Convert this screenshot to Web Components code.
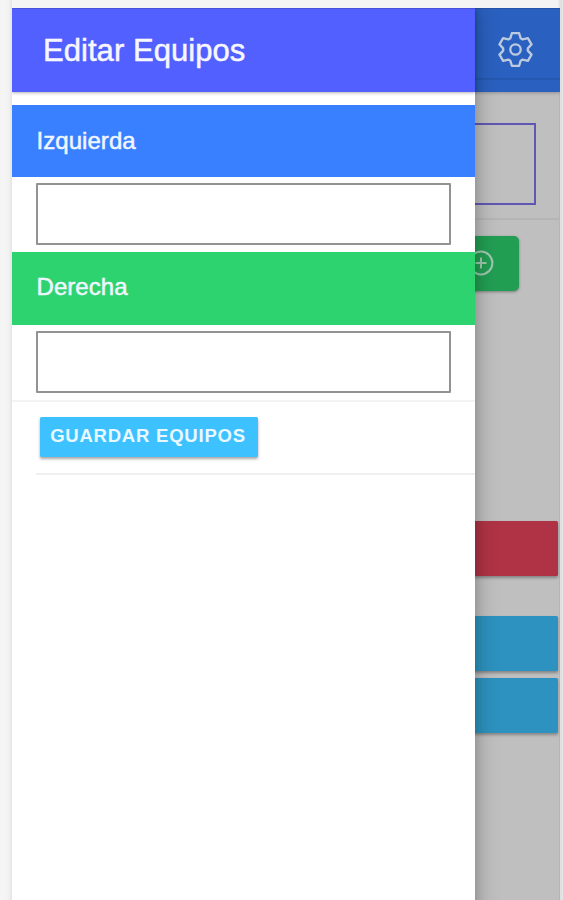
<!DOCTYPE html>
<html lang="es">
<head>
<meta charset="utf-8">
<title>Editar Equipos</title>
<style>
html,body{margin:0;height:100%;overflow:hidden;background:#f4f4f4;font-family:"Liberation Sans",Arial,sans-serif}
</style>
</head>
<body>
<device-frame>
  <match-page></match-page>
  <side-menu heading="Editar Equipos">
    <team-field label="Izquierda" style="--bar:#3880ff"></team-field>
    <team-field label="Derecha" style="--bar:#2dd36f;--lift:2px"></team-field>
    <menu-action><save-button>GUARDAR EQUIPOS</save-button></menu-action>
  </side-menu>
</device-frame>
<script>
function define(name, render) {
  customElements.define(name, class extends HTMLElement {
    constructor() {
      super();
      this.attachShadow({ mode: 'open' });
    }
    connectedCallback() {
      this.shadowRoot.innerHTML = '<style>*{box-sizing:border-box}</style>' + render(this);
    }
  });
}

define('device-frame', () => `
<style>
:host{display:block;box-sizing:border-box;height:100vh;padding:8px 3px 0 12px;background:linear-gradient(90deg,#f5f5f5 0 5px,#f1f1f1 9px,#e6e6e6 11.5px,#f4f4f4 12px,#f4f4f4 558px,#dedede 560px,#e6e6e6)}
.stack{display:grid;height:100%;overflow:hidden}
::slotted(*){grid-area:1/1;min-width:0}
</style>
<div class="stack"><slot></slot></div>`);

define('side-menu', el => `
<style>
:host{display:block;width:463.4px;height:calc(100% + 40px);background:#fff;box-shadow:3px 0 20px rgba(0,0,0,.22),1px 0 8px rgba(0,0,0,.1);z-index:1}
header{height:84px;padding:0 31px;display:flex;align-items:center;background:#5260ff;color:#f6f7ff;font-size:31px;letter-spacing:.05px;box-shadow:0 1px 3px rgba(0,0,0,.3);border-top:1px solid #4651d8}
h1{font:inherit;margin:0;-webkit-text-stroke:.5px currentColor}
main{padding-top:12.6px}
</style>
<header><h1>${el.getAttribute('heading')}</h1></header>
<main><slot></slot></main>`);

define('team-field', el => `
<style>
:host{display:block;height:147.6px}
.bar{height:72.5px;padding:0 24.5px var(--lift,0px);display:flex;align-items:center;background:var(--bar);color:#f0f6ff;font-size:24px;letter-spacing:.05px;-webkit-text-stroke:.5px currentColor}
input{display:block;width:415px;height:62px;margin:6px 0 0 24px;border:2px solid #929292;border-radius:1px;background:#fff}
</style>
<div class="bar">${el.getAttribute('label')}</div><input aria-label="${el.getAttribute('label')}">`);

define('menu-action', () => `
<style>
:host{display:block;border-top:2px solid #f3f3f3}
div{height:73.5px;margin-left:24px;padding:15px 4px;border-bottom:2px solid #f0f0f0}
</style>
<div><slot></slot></div>`);

define('save-button', () => `
<style>
:host{display:block;width:218px;height:40px}
button{width:100%;height:100%;padding:0 2px 2px 0;border:0;border-radius:1.5px;background:#3dc2ff;color:#e9f8ff;font:bold 18.5px "Liberation Sans",Arial,sans-serif;letter-spacing:.78px;white-space:nowrap;box-shadow:0 2px 3px rgba(0,0,0,.35)}
</style>
<button><slot></slot></button>`);

define('settings-icon', () => `
<style>:host{display:block;width:39px;height:39px}svg{display:block}</style>
<svg width="39" height="39" viewBox="-19.5 -19.5 39 39" fill="none" stroke="#bccae0" stroke-width="2.3" stroke-linejoin="round"><circle r="5.2"/><path d="M-5.2-11.2L-3.6-16.4H3.6L5.2-11.2 7.1-10.1 12.4-11.3 16-5.1 12.3-1.1V1.1L16 5.1 12.4 11.3 7.1 10.1 5.2 11.2 3.6 16.4H-3.6L-5.2 11.2-7.1 10.1-12.4 11.3-16 5.1-12.3 1.1V-1.1L-16-5.1-12.4-11.3-7.1-10.1Z"/></svg>`);

define('add-icon', () => `
<style>:host{display:block;width:26px;height:26px}svg{display:block}</style>
<svg width="26" height="26" viewBox="0 0 26 26" fill="none" stroke="#a0c9af" stroke-width="2" stroke-linecap="round"><circle cx="13" cy="13" r="11.4"/><path d="M13 8.2v9.6M8.2 13h9.6"/></svg>`);

define('match-page', () => `
<style>
:host{display:block;width:547.5px;height:100%;background:#bfbfbf;border-right:1px solid #b5b5b5;box-sizing:border-box}
header{height:84px;margin-right:-1px;background:#2a60bf;border-top:1px solid #2555a8;box-shadow:0 1px 3px rgba(0,0,0,.25)}
.tools{height:71px;display:flex;justify-content:flex-end;align-items:center;padding:0 25px 0 0;border-bottom:2px solid #2558b0}
settings-icon{margin-top:11px}
.score{padding:30.5px 23px 13px;border-bottom:2px solid #b5b5b5}
.box{height:82.5px;margin-left:280px;border:2px solid #6057b3}
.add{display:flex;align-items:center;justify-content:flex-start;width:75px;height:55px;margin:15.5px 40px 0 auto;padding-left:24px;background:#229e53;border-radius:5px;box-shadow:0 1px 3px rgba(0,0,0,.35)}
.bar{height:55px;margin-right:.5px;border-radius:1.5px;box-shadow:0 2px 3px rgba(0,0,0,.3);background:#2d92bf}
.danger{background:#b03345;margin-top:230.5px}
.first{margin-top:40px}.second{margin-top:6.5px}
</style>
<header><div class="tools"><settings-icon></settings-icon></div></header>
<section class="score"><div class="box"></div></section>
<div class="add"><add-icon></add-icon></div>
<div class="bar danger"></div>
<div class="bar first"></div>
<div class="bar second"></div>`);
</script>
</body>
</html>
